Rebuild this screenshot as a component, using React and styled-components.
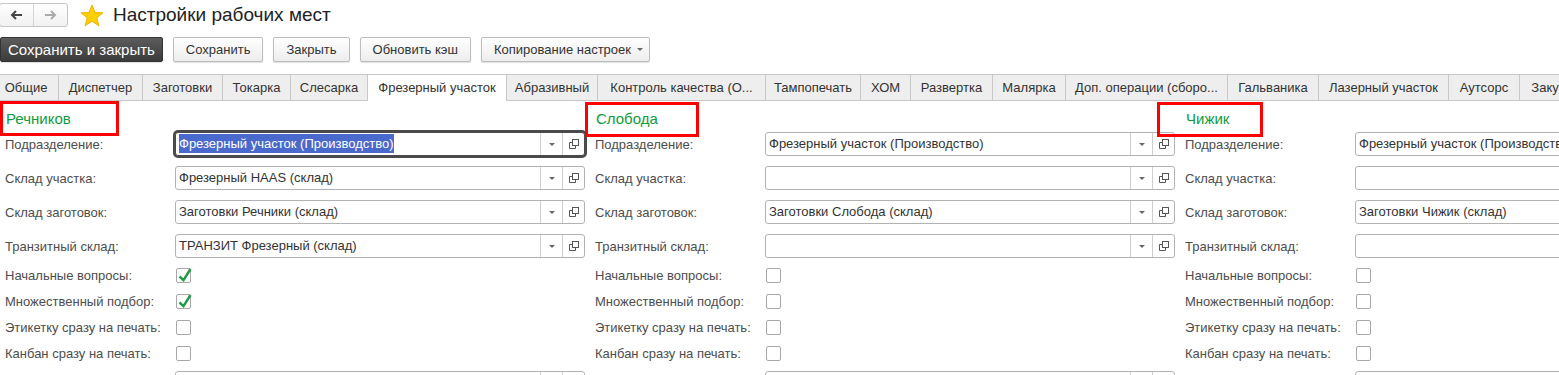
import React from "react";
import styled, { createGlobalStyle } from "styled-components";

const GlobalStyle = createGlobalStyle`
  html, body {
    margin: 0;
    padding: 0;
    background: #fff;
  }
  body {
    font-family: "Liberation Sans", Arial, sans-serif;
    font-size: 13px;
    color: #4d4d4d;
    overflow: hidden;
  }
`;

// tab titles with the widths they have in the form
const tabs = [
  ["Общие", 66],
  ["Диспетчер", 85],
  ["Заготовки", 81],
  ["Токарка", 69],
  ["Слесарка", 78],
  ["Фрезерный участок", 140],
  ["Абразивный", 92],
  ["Контроль качества (О...", 169],
  ["Тампопечать", 96],
  ["ХОМ", 51],
  ["Развертка", 83],
  ["Малярка", 74],
  ["Доп. операции (сборо...", 163],
  ["Гальваника", 92],
  ["Лазерный участок", 131],
  ["Аутсорс", 72],
  ["Закупки", 72],
];

const places = [
  {
    name: "Речников",
    mark: { left: 0, top: 0, width: 119 },
    unit: "Фрезерный участок (Производство)",
    store: "Фрезерный HAAS (склад)",
    blanks: "Заготовки Речники (склад)",
    transit: "ТРАНЗИТ Фрезерный (склад)",
    checks: [true, true, false, false],
    focused: true,
  },
  {
    name: "Слобода",
    mark: { left: -5, top: 1, width: 114 },
    unit: "Фрезерный участок (Производство)",
    store: "",
    blanks: "Заготовки Слобода (склад)",
    transit: "",
    checks: [false, false, false, false],
  },
  {
    name: "Чижик",
    mark: { left: -23, top: 1, width: 106 },
    unit: "Фрезерный участок (Производство)",
    store: "",
    blanks: "Заготовки Чижик (склад)",
    transit: "",
    checks: [false, false, false, false],
  },
];

const checkLabels = [
  "Начальные вопросы:",
  "Множественный подбор:",
  "Этикетку сразу на печать:",
  "Канбан сразу на печать:",
];

function Arrow({ dir, color }) {
  const d = dir === "left" ? "M12 6H2M6 2L2 6l4 4" : "M1 6h10M7 2l4 4-4 4";
  return (
    <svg width="13" height="12" viewBox="0 0 13 12">
      <path d={d} fill="none" stroke={color} strokeWidth="2" />
    </svg>
  );
}

function Star() {
  return (
    <svg width="24" height="23" viewBox="0 0 24 23">
      <polygon
        points="12,1 15,8.6 23,8.8 16.7,13.8 19,21.8 12,17.2 5,21.8 7.3,13.8 1,8.8 9,8.6"
        fill="#ffd000"
        stroke="#f0b000"
        strokeWidth="1"
        strokeLinejoin="round"
      />
    </svg>
  );
}

function OpenIcon() {
  return (
    <svg width="11" height="11" viewBox="0 0 11 11">
      <rect x="4.5" y="0.5" width="6" height="6" fill="none" stroke="#555" />
      <path d="M4.5 3.5H1.5V9.5H7.5V6.5" fill="none" stroke="#555" />
    </svg>
  );
}

function Field({ label, value, selected, focused }) {
  return (
    <Row>
      <Label>{label}</Label>
      <Input focused={focused}>
        <InputText>{selected ? <Selected>{value}</Selected> : value}</InputText>
        <SideButton>
          <Caret />
        </SideButton>
        <SideButton>
          <OpenIcon />
        </SideButton>
      </Input>
    </Row>
  );
}

function CheckField({ label, checked }) {
  return (
    <CheckRow>
      <Label>{label}</Label>
      <Box>
        {checked && (
          <svg width="15" height="15" viewBox="0 0 15 15" style={{ overflow: "visible" }}>
            <path d="M2.5 7.5L6.5 11.2L13.5 0" fill="none" stroke="#1e9a48" strokeWidth="2.4" />
          </svg>
        )}
      </Box>
    </CheckRow>
  );
}

export default function App() {
  return (
    <Page>
      <GlobalStyle />
      <Header>
        <NavGroup>
          <NavButton>
            <Arrow dir="left" color="#444" />
          </NavButton>
          <NavButton divided>
            <Arrow dir="right" color="#aaa" />
          </NavButton>
        </NavGroup>
        <StarBox>
          <Star />
        </StarBox>
        <Title>Настройки рабочих мест</Title>
      </Header>

      <Toolbar>
        <MainButton>Сохранить и закрыть</MainButton>
        <Button>Сохранить</Button>
        <Button>Закрыть</Button>
        <Button>Обновить кэш</Button>
        <Button menu>
          Копирование настроек
          <Caret />
        </Button>
      </Toolbar>

      <TabStrip>
        {tabs.map(([t, w]) => (
          <Tab key={t} w={w} active={t === "Фрезерный участок"}>
            {t}
          </Tab>
        ))}
      </TabStrip>

      <Columns>
        {places.map((p) => (
          <Column key={p.name}>
            <ColumnHead>
              {p.name}
              <RedMark left={p.mark.left} top={p.mark.top} width={p.mark.width} />
            </ColumnHead>
            <Field label="Подразделение:" value={p.unit} selected={p.focused} focused={p.focused} />
            <Field label="Склад участка:" value={p.store} />
            <Field label="Склад заготовок:" value={p.blanks} />
            <Field label="Транзитный склад:" value={p.transit} />
            {checkLabels.map((l, i) => (
              <CheckField key={l} label={l} checked={p.checks[i]} />
            ))}
            <Field label="" value="" />
          </Column>
        ))}
      </Columns>
    </Page>
  );
}

const Page = styled.div`
  width: 1559px;
  height: 375px;
  overflow: hidden;
`;

const Header = styled.div`
  display: flex;
  align-items: center;
  height: 30px;
`;

const NavGroup = styled.div`
  display: flex;
  height: 24px;
  box-sizing: border-box;
  border: 1px solid #c6c6c6;
  border-radius: 3px;
  background: linear-gradient(#ffffff, #f1f1f1);
  margin-left: -1px;
`;

const NavButton = styled.div`
  width: 33px;
  display: flex;
  align-items: center;
  justify-content: center;
  border-left: ${(p) => (p.divided ? "1px solid #d4d4d4" : "none")};
`;

const StarBox = styled.div`
  display: flex;
  margin-left: 12px;
`;

const Title = styled.div`
  margin-left: 9px;
  font-size: 19px;
  color: #222;
`;

const Toolbar = styled.div`
  display: flex;
  gap: 10px;
  margin-top: 7px;
`;

const Button = styled.div`
  display: flex;
  align-items: center;
  gap: 6px;
  height: 25px;
  box-sizing: border-box;
  padding: ${(p) => (p.menu ? "0 6px 0 12px" : "0 12px")};
  border: 1px solid #bcbcbc;
  border-radius: 2px;
  background: linear-gradient(#ffffff, #ededed);
  box-shadow: 0 1px 1px rgba(0, 0, 0, 0.12);
  font-size: 13px;
  color: #333;
  white-space: nowrap;
`;

const MainButton = styled(Button)`
  padding: 0 7px;
  border-color: #333;
  background: linear-gradient(#5c5c5c, #3b3b3b);
  color: #fff;
  font-size: 15px;
`;

const Caret = styled.span`
  width: 0;
  height: 0;
  border-left: 3px solid transparent;
  border-right: 3px solid transparent;
  border-top: 3px solid #666;
`;

const TabStrip = styled.div`
  display: flex;
  align-items: flex-end;
  margin-top: 12px;
  margin-left: -6px;
  border-bottom: 1px solid #c8c8c8;
  white-space: nowrap;
`;

const Tab = styled.div`
  flex-shrink: 0;
  position: relative;
  z-index: ${(p) => (p.active ? 1 : 0)};
  width: ${(p) => p.w}px;
  height: ${(p) => (p.active ? "27px" : "26px")};
  margin-bottom: ${(p) => (p.active ? "-1px" : "0")};
  margin-left: -1px;
  box-sizing: border-box;
  border: 1px solid #c8c8c8;
  border-bottom: none;
  background: ${(p) => (p.active ? "#fff" : "#eeeeee")};
  text-align: center;
  line-height: 25px;
  font-size: 13px;
  color: #333;
  overflow: hidden;
`;

const Columns = styled.div`
  display: flex;
`;

const Column = styled.div`
  width: 590px;
  flex-shrink: 0;
`;

const ColumnHead = styled.div`
  position: relative;
  height: 26px;
  box-sizing: border-box;
  padding: 9px 0 0 6px;
  font-size: 15px;
  line-height: 17px;
  color: #0f9b3e;
`;

const RedMark = styled.div`
  position: absolute;
  left: ${(p) => p.left}px;
  top: ${(p) => p.top}px;
  width: ${(p) => p.width}px;
  height: 35px;
  box-sizing: border-box;
  border: 3px solid #ff0000;
  pointer-events: none;
`;

const Row = styled.div`
  display: flex;
  align-items: center;
  height: 34px;
`;

const CheckRow = styled(Row)`
  height: 25.75px;
`;

const Label = styled.div`
  width: 175px;
  flex-shrink: 0;
  box-sizing: border-box;
  padding-left: 5px;
  white-space: nowrap;
  color: #4d4d4d;
`;

const Input = styled.div`
  display: flex;
  width: 410px;
  height: 24px;
  flex-shrink: 0;
  box-sizing: border-box;
  border: 1px solid ${(p) => (p.focused ? "#4a4a4a" : "#b3b3b3")};
  border-radius: 3px;
  box-shadow: ${(p) => (p.focused ? "0 0 0 2px #4a4a4a" : "none")};
  background: #fff;
`;

const InputText = styled.div`
  flex: 1;
  padding: 0 3px;
  line-height: 22px;
  color: #333;
  white-space: nowrap;
  overflow: hidden;
`;

const Selected = styled.span`
  background: #4a69cc;
  color: #fff;
  padding: 2px 0;
`;

const SideButton = styled.div`
  width: 21px;
  display: flex;
  align-items: center;
  justify-content: center;
  border-left: 1px solid #cfcfcf;
`;

const Box = styled.div`
  width: 15px;
  height: 15px;
  margin-left: 1px;
  box-sizing: border-box;
  border: 1px solid #a8a8a8;
  border-radius: 2px;
  background: #fff;
  display: flex;
  align-items: flex-start;
  justify-content: flex-start;
`;
